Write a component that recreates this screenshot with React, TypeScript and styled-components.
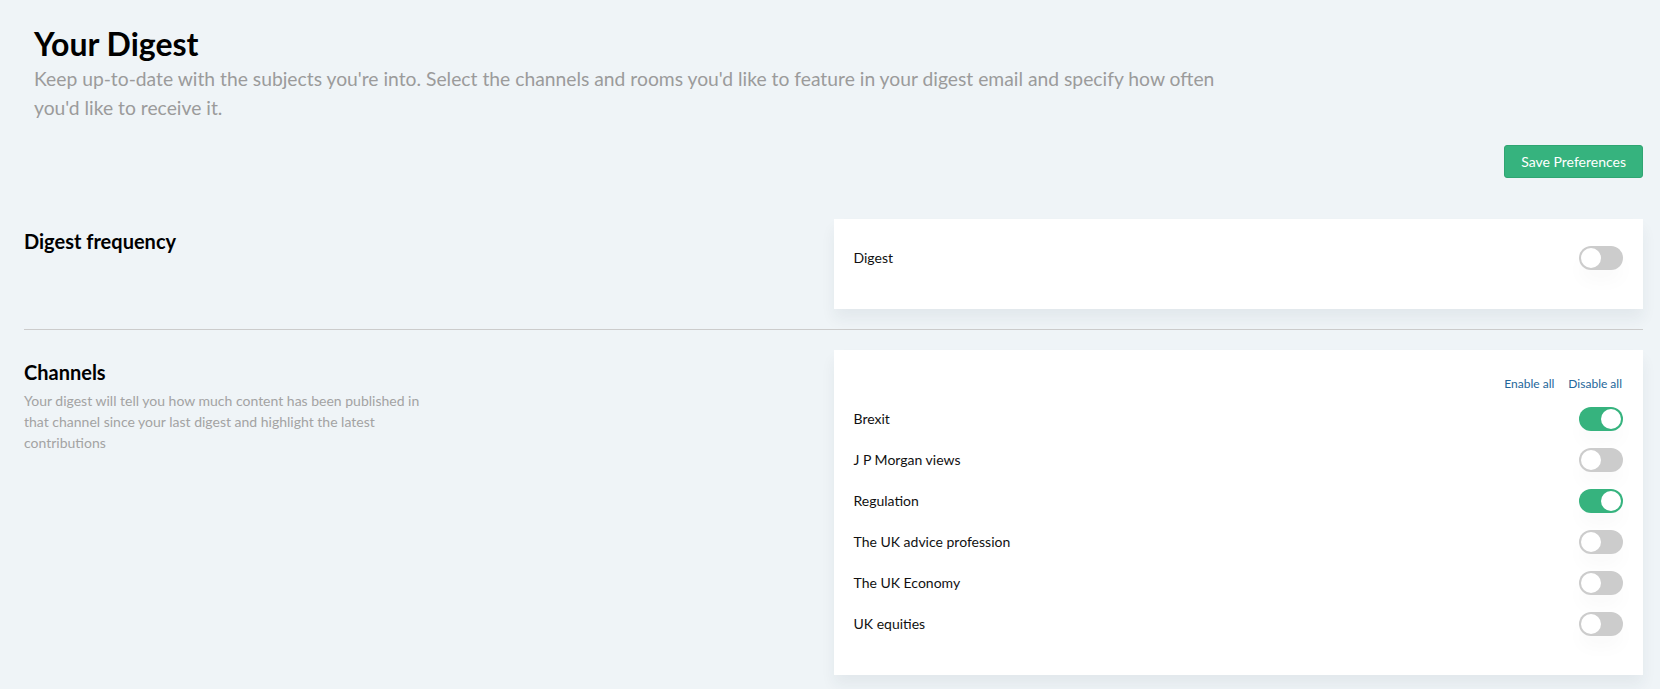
import React, { useState } from 'react';
import styled, { createGlobalStyle } from 'styled-components';

const GlobalStyle = createGlobalStyle`
  * {
    box-sizing: border-box;
  }

  body {
    margin: 0;
    background: #eff4f7;
    font-family: Lato, "Open Sans", sans-serif;
    color: #111;
  }
`;

const Page = styled.div`
  padding: 0 17px 0 24px;
`;

const Header = styled.header`
  padding: 24px 0 0 10px;
`;

const Title = styled.h1`
  margin: 0;
  font-size: 32px;
  line-height: 40px;
  font-weight: 700;
  color: #000;
`;

const Intro = styled.p`
  margin: 0;
  max-width: 1210px;
  font-size: 19.3px;
  line-height: 29px;
  color: #9b9b9b;
`;

const Toolbar = styled.div`
  display: flex;
  justify-content: flex-end;
  padding: 23px 0 21px;
`;

const SaveButton = styled.button`
  height: 33px;
  padding: 0 16px;
  border: 1px solid #2fa572;
  border-radius: 3px;
  background: #36b37e;
  color: #fff;
  font-family: inherit;
  font-size: 14px;
  cursor: pointer;
`;

const Section = styled.section<{ $divided?: boolean }>`
  display: grid;
  grid-template-columns: 1fr 1fr;
  padding: 20px 0;
  border-bottom: ${({ $divided }) => ($divided ? '1px solid #cccccc' : 'none')};
`;

const SectionInfo = styled.div`
  padding-top: 8px;
`;

const SectionTitle = styled.h3`
  margin: 0;
  font-size: 20px;
  line-height: 28px;
  font-weight: 700;
  color: #000;
`;

const SectionText = styled.p`
  margin: 4px 0 0;
  max-width: 400px;
  font-size: 14px;
  line-height: 21px;
  color: #a3a3a3;
`;

const Card = styled.div`
  background: #fff;
  padding: 18px 20px 31px;
  box-shadow: 0 10px 14px rgba(30, 50, 70, 0.06);
`;

const Actions = styled.div`
  display: flex;
  justify-content: flex-end;
  align-items: center;
  gap: 14px;
  height: 30px;
  padding-right: 1px;
`;

const LinkButton = styled.button`
  border: none;
  background: none;
  padding: 0;
  font-family: inherit;
  font-size: 12px;
  color: #24669a;
  cursor: pointer;
`;

const Row = styled.div`
  display: flex;
  align-items: center;
  justify-content: space-between;
  height: 41px;
`;

const Label = styled.span`
  font-size: 14px;
  color: #111;
`;

const Track = styled.button<{ $on: boolean }>`
  position: relative;
  width: 44px;
  height: 24px;
  padding: 0;
  border: none;
  border-radius: 12px;
  background: ${({ $on }) => ($on ? '#36b37e' : '#cccccc')};
  box-shadow: 0 12px 18px rgba(0, 0, 0, 0.025);
  cursor: pointer;
`;

const Knob = styled.span<{ $on: boolean }>`
  position: absolute;
  top: 2px;
  left: ${({ $on }) => ($on ? '22px' : '2px')};
  width: 20px;
  height: 20px;
  border-radius: 50%;
  background: #fff;
  transition: left 0.15s;
`;

const Toggle: React.FC<{ on: boolean; onClick: () => void }> = ({ on, onClick }) => (
  <Track $on={on} onClick={onClick} aria-pressed={on}>
    <Knob $on={on} />
  </Track>
);

const channelNames = [
  'Brexit',
  'J P Morgan views',
  'Regulation',
  'The UK advice profession',
  'The UK Economy',
  'UK equities'
];

const App: React.FC = () => {
  const [digest, setDigest] = useState(false);
  const [channels, setChannels] = useState<boolean[]>([true, false, true, false, false, false]);

  const flip = (i: number) =>
    setChannels(prev => prev.map((v, j) => (j === i ? !v : v)));

  return (
    <>
      <GlobalStyle />
      <Page>
        <Header>
          <Title>Your Digest</Title>
          <Intro>
            Keep up-to-date with the subjects you're into. Select the channels and rooms you'd like
            to feature in your digest email and specify how often you'd like to receive it.
          </Intro>
        </Header>

        <Toolbar>
          <SaveButton>Save Preferences</SaveButton>
        </Toolbar>

        <Section $divided>
          <SectionInfo>
            <SectionTitle>Digest frequency</SectionTitle>
          </SectionInfo>
          <Card>
            <Row>
              <Label>Digest</Label>
              <Toggle on={digest} onClick={() => setDigest(!digest)} />
            </Row>
          </Card>
        </Section>

        <Section>
          <SectionInfo>
            <SectionTitle>Channels</SectionTitle>
            <SectionText>
              Your digest will tell you how much content has been published in that channel since
              your last digest and highlight the latest contributions
            </SectionText>
          </SectionInfo>
          <Card>
            <Actions>
              <LinkButton onClick={() => setChannels(channels.map(() => true))}>Enable all</LinkButton>
              <LinkButton onClick={() => setChannels(channels.map(() => false))}>Disable all</LinkButton>
            </Actions>
            {channelNames.map((name, i) => (
              <Row key={name}>
                <Label>{name}</Label>
                <Toggle on={channels[i]} onClick={() => flip(i)} />
              </Row>
            ))}
          </Card>
        </Section>
      </Page>
    </>
  );
};

export default App;
